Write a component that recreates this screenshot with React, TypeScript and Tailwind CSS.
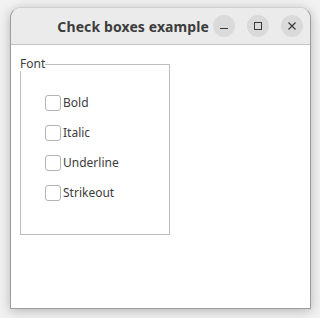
import React from "react";

function Check({ label }: { label: string }) {
  return (
    <div className="flex items-center h-[16px]">
      <div className="w-[16px] h-[16px] rounded-[3px] border border-[#b4b4b4] bg-white box-border" />
      <span className="ml-[2px] text-[12px] text-[#3c3c3c] leading-none">{label}</span>
    </div>
  );
}

export default function App() {
  return (
    <div
      className="w-[320px] h-[318px] bg-[#f2f2f2] pt-[7px] pl-[10px]"
      style={{ fontFamily: '"Noto Sans", "Open Sans", sans-serif' }}
    >
      <div className="w-[301px] h-[302px] rounded-t-[11px] border border-[#9c9c9c] border-t-[#d0d0d0] bg-white overflow-hidden shadow-[0_2px_12px_rgba(0,0,0,0.25)] flex flex-col">
        <div className="h-[37px] bg-[#ebebeb] border-b border-[#c4c4c4] flex items-center shrink-0">
          <div className="flex-1 flex justify-end pr-[4px]">
            <span className="text-[14px] font-bold text-[#3d3d3d] tracking-[0.1px]">Check boxes example</span>
          </div>
          <div className="flex items-center gap-[12px] pr-[7px]">
            <div className="w-[22px] h-[22px] rounded-full bg-[#dadada] flex items-center justify-center">
              <div className="w-[8px] h-[1px] bg-[#3a3a3a] mt-[5px]" />
            </div>
            <div className="w-[22px] h-[22px] rounded-full bg-[#dadada] flex items-center justify-center">
              <div className="w-[8px] h-[8px] border border-[#3a3a3a]" />
            </div>
            <div className="w-[22px] h-[22px] rounded-full bg-[#dadada] flex items-center justify-center">
              <svg width="10" height="10" viewBox="0 0 10 10">
                <path d="M1.5 1.5 L8.5 8.5 M8.5 1.5 L1.5 8.5" stroke="#3a3a3a" strokeWidth="1.2" />
              </svg>
            </div>
          </div>
        </div>
        <div className="pl-[9px] pt-[12px]">
          <fieldset className="w-[150px] h-[178px] border border-[#bdbdbd] m-0 p-0">
            <legend className="text-[12px] text-[#3c3c3c] leading-[14px] p-0 ml-[-1px]">Font</legend>
            <div className="flex flex-col gap-[14px] pl-[24px] pt-[24px]">
              <Check label="Bold" />
              <Check label="Italic" />
              <Check label="Underline" />
              <Check label="Strikeout" />
            </div>
          </fieldset>
        </div>
      </div>
    </div>
  );
}
